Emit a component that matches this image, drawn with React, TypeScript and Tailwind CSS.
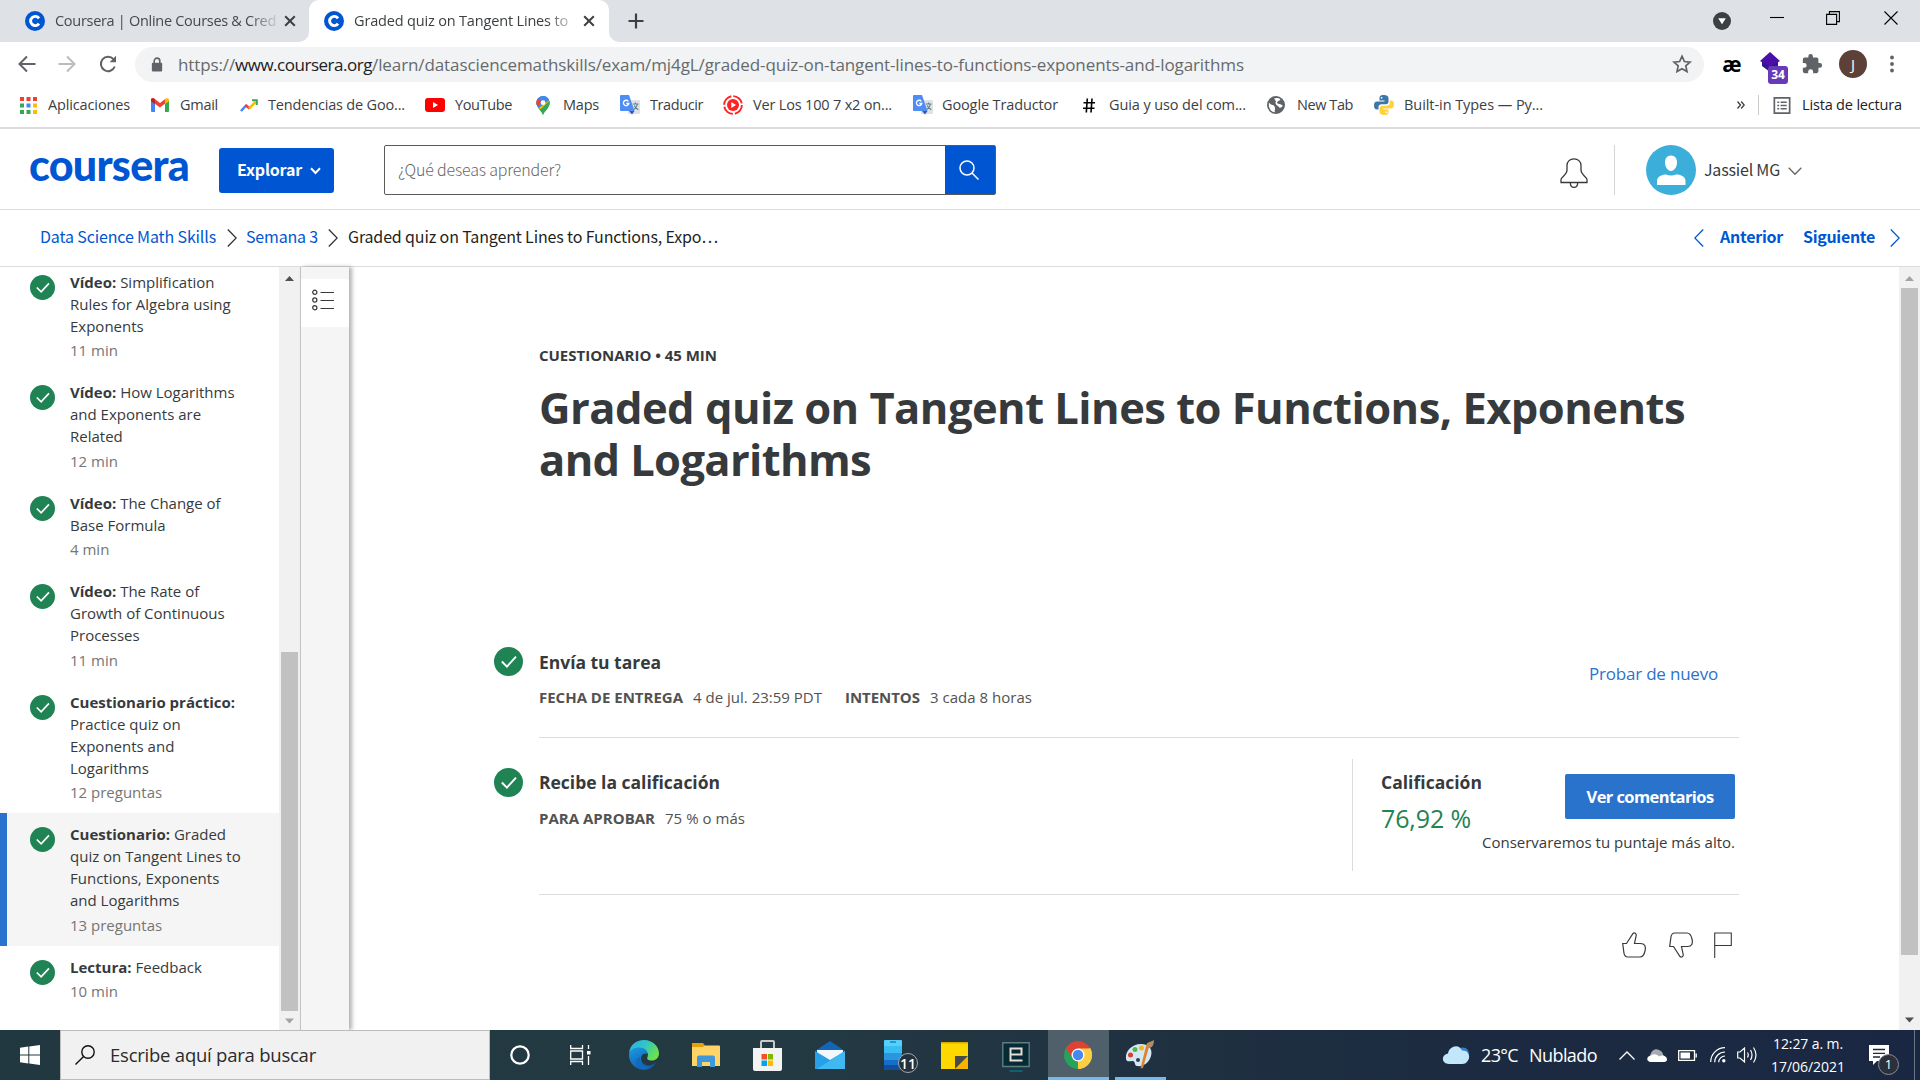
import React, { useLayoutEffect, useRef, useState } from "react";

/* One line of text whose tracking is adjusted so that it fills its box. */
function Fit({ children, className = "" }: { children: string; className?: string }) {
  const box = useRef<HTMLDivElement>(null);
  const inner = useRef<HTMLSpanElement>(null);
  const [spacing, setSpacing] = useState(0);
  useLayoutEffect(() => {
    if (box.current && inner.current) {
      const target = box.current.getBoundingClientRect().width;
      const natural = inner.current.getBoundingClientRect().width;
      setSpacing((target - natural) / children.length);
    }
  }, [children]);
  return (
    <div ref={box} className={"shrink-0 whitespace-nowrap " + className}>
      <span ref={inner} style={{ letterSpacing: spacing + "px" }}>
        {children}
      </span>
    </div>
  );
}

function CourseraMark() {
  return (
    <svg viewBox="0 0 20 20" className="h-5 w-5 shrink-0">
      <circle cx="10" cy="10" r="10" fill="#0056d2" />
      <path d="M14 7.4 A4.6 4.6 0 1 0 14 12.6" fill="none" stroke="#fff" strokeWidth="2.9" />
    </svg>
  );
}

function TabClose() {
  return (
    <svg viewBox="0 0 12 12" className="h-3 w-3 shrink-0" stroke="#3c4043" strokeWidth="2">
      <path d="M1.2 1.2 10.8 10.8M10.8 1.2 1.2 10.8" />
    </svg>
  );
}

function TabStrip() {
  return (
    <div className="flex h-[42px] items-end bg-[#dee1e6]">
      <div className="flex h-[42px] w-[309px] shrink-0 items-center pl-[25px]">
        <CourseraMark />
        <Fit className="ml-[10px] w-[221px] text-[14.5px] text-[#45494d] [mask-image:linear-gradient(to_right,black_88%,rgba(0,0,0,0.15))]">
          Coursera | Online Courses &amp; Cred
        </Fit>
        <div className="ml-[8px]">
          <TabClose />
        </div>
      </div>
      <div className="relative flex h-[42px] w-[300px] shrink-0 items-center rounded-t-[10px] bg-white pl-[15px]">
        <svg viewBox="0 0 10 10" className="absolute bottom-0 left-[-10px] h-[10px] w-[10px]">
          <path d="M10 0V10H0A10 10 0 0 0 10 0" fill="#fff" />
        </svg>
        <svg viewBox="0 0 10 10" className="absolute right-[-10px] bottom-0 h-[10px] w-[10px]">
          <path d="M0 0V10H10A10 10 0 0 1 0 0" fill="#fff" />
        </svg>
        <CourseraMark />
        <Fit className="ml-[10px] w-[214px] text-[14.5px] text-[#3c4043] [mask-image:linear-gradient(to_right,black_90%,rgba(0,0,0,0.35))]">
          Graded quiz on Tangent Lines to
        </Fit>
        <div className="ml-[15px]">
          <TabClose />
        </div>
      </div>
      <svg viewBox="0 0 16 16" className="mb-[13px] ml-[19px] h-4 w-4" stroke="#3c4043" strokeWidth="2.2">
        <path d="M8 .5V15.5M.5 8H15.5" />
      </svg>
      <div className="flex h-[42px] flex-1 items-center justify-end">
        <svg viewBox="0 0 18 18" className="h-[18px] w-[18px]">
          <circle cx="9" cy="9" r="9" fill="#3c4043" />
          <path d="M5.2 6.3H12.8L9 12.3Z" fill="#fff" />
        </svg>
        <svg viewBox="0 0 14 14" className="mb-[8px] ml-[39px] h-[14px] w-[14px]" stroke="#000" strokeWidth="1.1">
          <path d="M0 7.5H14" />
        </svg>
        <svg viewBox="0 0 14 14" className="mb-[6px] ml-[42px] h-[14px] w-[14px]" fill="none" stroke="#000" strokeWidth="1.1">
          <path d="M.6 3.4H10.6V13.4H.6ZM3.4 3.4V.6H13.4V10.6H10.6" />
        </svg>
        <svg viewBox="0 0 14 14" className="mr-[22px] mb-[6px] ml-[44px] h-[14px] w-[14px]" stroke="#000" strokeWidth="1.1">
          <path d="M.5.5 13.5 13.5M13.5.5.5 13.5" />
        </svg>
      </div>
    </div>
  );
}

function AddressBar() {
  return (
    <div className="flex h-[44px] items-center bg-white pl-[18px]">
      <svg viewBox="0 0 18 18" className="h-[18px] w-[18px]" fill="none" stroke="#5f6368" strokeWidth="2">
        <path d="M17.5 9H2M9 1.5 1.5 9 9 16.5" />
      </svg>
      <svg viewBox="0 0 18 18" className="ml-[22px] h-[18px] w-[18px]" fill="none" stroke="#babcbe" strokeWidth="2">
        <path d="M.5 9H16M9 1.5 16.5 9 9 16.5" />
      </svg>
      <svg viewBox="0 0 18 18" className="ml-[23px] h-[18px] w-[18px]" fill="none" stroke="#5f6368" strokeWidth="2">
        <path d="M15.8 11.5A7.2 7.2 0 1 1 14.5 4.2" />
        <path d="M17 .8V7.2H10.6Z" fill="#5f6368" stroke="none" />
      </svg>
      <div className="ml-[18px] flex h-[35px] w-[1569px] items-center rounded-full bg-[#f1f3f4]">
        <svg viewBox="0 0 12 16" className="ml-[16px] h-[15px] w-[12px]">
          <rect x=".5" y="6" width="11" height="9.5" rx="1.2" fill="#5f6368" />
          <path d="M3 7V4.2A3 3 0 0 1 9 4.2V7" fill="none" stroke="#5f6368" strokeWidth="1.7" />
        </svg>
        <div className="mt-[2px] ml-[15px] flex text-[17px] text-[#666a6e]">
          <Fit className="w-[57px]">https://</Fit>
          <Fit className="w-[137px] text-[#202124]">www.coursera.org</Fit>
          <Fit className="w-[872px]">/learn/datasciencemathskills/exam/mj4gL/graded-quiz-on-tangent-lines-to-functions-exponents-and-logarithms</Fit>
        </div>
        <svg viewBox="0 0 20 20" className="ml-[428px] h-[20px] w-[20px]" fill="none" stroke="#5f6368" strokeWidth="1.7">
          <path d="M10 2.2 12.4 7.5 18 8.1 13.8 11.9 15 17.6 10 14.7 5 17.6 6.2 11.9 2 8.1 7.6 7.5Z" />
        </svg>
      </div>
      <div className="ml-[17px] w-[22px] text-center text-[21px] leading-[20px] font-bold text-black">æ</div>
      <div className="relative ml-[17px] h-[34px] w-[28px]">
        <svg viewBox="0 0 20 22" className="absolute top-[5px] left-0 h-[22px] w-[20px]">
          <path d="M2 10 10 6 18 10V14L10 20 2 14Z" fill="#33148a" />
          <path d="M10 0 20 9 10 15 0 9Z" fill="#4a0fa8" />
        </svg>
        <div className="absolute right-0 bottom-[-3px] h-[18px] w-[20px] rounded-[3px] bg-[#673ab7] text-center text-[12px] leading-[18px] font-bold text-white">
          34
        </div>
      </div>
      <svg viewBox="0 0 24 24" className="ml-[13px] h-[22px] w-[22px]">
        <path
          fill="#5f6368"
          d="M20.5 11H19V7a2 2 0 0 0-2-2h-4V3.500a2.500 2.500 0 0 0-5 0V5H4a2 2 0 0 0-2 2v3.800h1.500a2.700 2.700 0 0 1 0 5.400H2V20a2 2 0 0 0 2 2h3.800v-1.500a2.700 2.700 0 0 1 5.400 0V22H17a2 2 0 0 0 2-2v-4h1.500a2.500 2.500 0 0 0 0-5Z"
        />
      </svg>
      <div className="ml-[16px] flex h-[28px] w-[28px] items-center justify-center rounded-full bg-[#5d4037] text-[15px] text-white">J</div>
      <svg viewBox="0 0 4 18" className="ml-[23px] h-[18px] w-[4px]" fill="#5f6368">
        <circle cx="2" cy="2.500" r="1.900" />
        <circle cx="2" cy="9" r="1.900" />
        <circle cx="2" cy="15.500" r="1.900" />
      </svg>
    </div>
  );
}

function TranslateIcon() {
  return (
    <svg viewBox="0 0 20 20" className="h-[20px] w-[20px]">
      <rect x="8" y="5" width="12" height="14" rx="1" fill="#dfe1e4" />
      <path d="M1 0H9L14.500 16H1A1 1 0 0 1 0 15V1A1 1 0 0 1 1 0Z" fill="#4f8df5" />
      <path d="M9 16H14.500L12 19.500Z" fill="#3357c0" />
      <path d="M8.300 6.300A2.700 2.700 0 1 0 8.800 8.500H6.300" fill="none" stroke="#fff" strokeWidth="1.300" />
      <path d="M12.800 9H18.500M15.500 7.500V9M17.500 9C17 12 15.500 13.500 13.800 14.500M14.300 10.500C15 12.500 16.500 13.800 18.300 14.800" fill="none" stroke="#5f7f88" strokeWidth="1.100" />
    </svg>
  );
}

function BookmarksBar() {
  return (
    <div className="flex h-[43px] items-center border-b-2 border-[#dadce0] bg-white pb-[3px] pl-[20px] text-[14.5px] text-[#3c4043]">
      <svg viewBox="0 0 17 17" className="h-[17px] w-[17px]">
        <path fill="#ea4335" d="M0 0h4v4H0zM6.500 0h4v4h-4zM13 0h4v4h-4z" />
        <path fill="#34a853" d="M0 6.500h4v4H0zM0 13h4v4H0z" />
        <path fill="#4285f4" d="M6.500 6.500h4v4h-4z" />
        <path fill="#fbbc04" d="M13 6.500h4v4h-4zM13 13h4v4h-4z" />
        <path fill="#34a853" d="M6.500 13h4v4h-4z" />
      </svg>
      <Fit className="ml-[11px] w-[82px]">Aplicaciones</Fit>
      <svg viewBox="0 0 18 14" className="ml-[21px] h-[14px] w-[18px]">
        <path fill="#4285f4" d="M0 1.500V13A1 1 0 0 0 1 14H4V5Z" />
        <path fill="#34a853" d="M18 1.500V13A1 1 0 0 1 17 14H14V5Z" />
        <path fill="#ea4335" d="M0 1.800C0 0 2 -.5 3.200.5L9 5 14.800.5V5L9 9.500 0 3Z" />
        <path fill="#fbbc04" d="M14 1.200C15.500-.5 18 0 18 2V3.200L14 6Z" />
        <path fill="#c5221f" d="M0 1.800C0 0 2-.5 4 1.200V6L0 3.200Z" />
      </svg>
      <Fit className="ml-[11px] w-[38px]">Gmail</Fit>
      <svg viewBox="0 0 18 13" className="ml-[22px] h-[13px] w-[18px]" fill="none" strokeWidth="2.500">
        <path d="M1 12 6.500 6" stroke="#4285f4" />
        <path d="M5.500 6 9.500 9.500" stroke="#ea4335" />
        <path d="M9 9.500 15.500 3" stroke="#fbbc04" />
        <path d="M12 1.300H16.800V6" stroke="#34a853" strokeWidth="2" />
      </svg>
      <Fit className="ml-[10px] w-[137px]">Tendencias de Goo...</Fit>
      <svg viewBox="0 0 20 14" className="ml-[20px] h-[14px] w-[20px]">
        <rect width="20" height="14" rx="3" fill="#f00" />
        <path d="M8 4V10L13 7Z" fill="#fff" />
      </svg>
      <Fit className="ml-[10px] w-[57px]">YouTube</Fit>
      <svg viewBox="0 0 14 20" className="ml-[24px] h-[19px] w-[14px]">
        <path d="M7 20C6 16 0 12.500 0 7A7 7 0 0 1 14 7C14 12.500 8 16 7 20Z" fill="#34a853" />
        <path d="M7 0A7 7 0 0 1 13.500 4.500L2.500 12.500Q0 9.500 0 7A7 7 0 0 1 7 0" fill="#4285f4" />
        <path d="M1.500 2.600 6 6 1.500 11Q0 9 0 7 0 4.500 1.500 2.600" fill="#ea4335" />
        <path d="M13.500 4.500Q14.500 8 12 11.500L7.500 16 2.500 12.500Z" fill="#fbbc04" />
        <path d="M14 7C14 12.500 8 16 7 20 6.500 18 5.500 16.500 4 14.500L13.800 5Z" fill="#34a853" />
        <circle cx="7" cy="7" r="2.500" fill="#fff" />
      </svg>
      <Fit className="ml-[13px] w-[36px]">Maps</Fit>
      <div className="ml-[21px]">
        <TranslateIcon />
      </div>
      <Fit className="ml-[10px] w-[53px]">Traducir</Fit>
      <svg viewBox="0 0 20 20" className="ml-[20px] h-[20px] w-[20px]">
        <circle cx="10" cy="10" r="8.900" fill="none" stroke="#f22" strokeWidth="1.900" strokeDasharray="12 1.980" />
        <circle cx="10" cy="10" r="6" fill="#f22" />
        <path d="M8.300 7V13L13 10Z" fill="#fff" />
      </svg>
      <Fit className="ml-[10px] w-[139px]">Ver Los 100 7 x2 on...</Fit>
      <div className="ml-[21px]">
        <TranslateIcon />
      </div>
      <Fit className="ml-[9px] w-[116px]">Google Traductor</Fit>
      <svg viewBox="0 0 12 15" className="ml-[25px] h-[15px] w-[12px]" stroke="#000" strokeWidth="1.600">
        <path d="M4.300.5 3.300 14.500M9 .5 8 14.500M.5 4.800H12M0 10.200H11.500" />
      </svg>
      <Fit className="ml-[14px] w-[137px]">Guia y uso del com...</Fit>
      <svg viewBox="0 0 18 18" className="ml-[21px] h-[18px] w-[18px]">
        <circle cx="9" cy="9" r="9" fill="#5f6368" />
        <path d="M2 6.500C4 10 6 8 7.500 10.500 9 13 7 13.500 8 16.300 4 16.300 1 12 2 6.500M7 2.500C9 1.500 12 2 13.500 3.300 12 5.500 10.500 4.500 10 7 12 8.500 13 7.500 15.800 9.500 14.500 12 12.500 12.500 11.500 10.500 9.500 9 8.500 8.500 8.500 6.500 9.500 5 8 4 7 2.500" fill="#fff" />
      </svg>
      <Fit className="ml-[12px] w-[56px]">New Tab</Fit>
      <svg viewBox="0 0 20 20" className="ml-[21px] h-[20px] w-[20px]">
        <path d="M10 0C6 0 5.500 1.500 5.500 3V5.500H10.500V6.500H3C1 6.500 0 8 0 10.500S1 14.500 3 14.500H4.500V12C4.500 10.300 6 9.300 7.500 9.300H12C13.500 9.300 14.500 8 14.500 6.800V3C14.500 1 12.500 0 10 0Z" fill="#3b77a8" />
        <path d="M10 20C14 20 14.500 18.500 14.500 17V14.500H9.500V13.500H17C19 13.500 20 12 20 9.500S19 5.500 17 5.500H15.700V8C15.700 9.700 14 10.700 12.500 10.700H8C6.500 10.700 5.500 12 5.500 13.200V17C5.500 19 7.500 20 10 20Z" fill="#ffd43b" />
        <circle cx="7.600" cy="2.800" r=".9" fill="#fff" />
        <circle cx="12.400" cy="17.200" r=".9" fill="#fff" />
      </svg>
      <Fit className="ml-[10px] w-[139px]">Built-in Types — Py...</Fit>
      <svg viewBox="0 0 8 8" className="mr-[13px] ml-auto h-[8px] w-[8px] shrink-0" fill="none" stroke="#3c4043" strokeWidth="1.300">
        <path d="M.5.500 3.500 4 .5 7.500M4.200.500 7.200 4 4.200 7.500" />
      </svg>
      <div className="h-[20px] w-px bg-[#c8cacd]" />
      <svg viewBox="0 0 18 18" className="ml-[14px] h-[17px] w-[18px] shrink-0" fill="none" stroke="#5f6368" strokeWidth="1.800">
        <path d="M.9.900H17.100V17.100H.9Z" />
        <path d="M4 5.500H6M4 9H6M4 12.500H6M7.500 5.500H14M7.500 9H14M7.500 12.500H14" strokeWidth="1.600" />
      </svg>
      <Fit className="mr-[18px] ml-[11px] w-[100px] text-[#202124]">Lista de lectura</Fit>
    </div>
  );
}

function Chevron({ flip = false, color }: { flip?: boolean; color: string }) {
  return (
    <svg viewBox="0 0 10 18" className={flip ? "h-[18px] w-[10px] shrink-0 -scale-x-100" : "h-[18px] w-[10px] shrink-0"} fill="none" stroke={color} strokeWidth="1.300">
      <path d="M.8.500 9.200 9 .8 17.500" />
    </svg>
  );
}

const SOURCE = "font-['Noto_Sans_CJK_SC',sans-serif] ";

function Header() {
  return (
    <div className={SOURCE + "flex h-[81px] items-center border-b border-[#dcdcdc] bg-white pt-[2px] text-[16px]"}>
      <Fit className="mb-[10px] ml-[29px] w-[160px] font-['Lato',sans-serif] text-[43px] leading-[44px] font-black text-[#0056d2]">coursera</Fit>
      <div className="ml-[30px] flex h-[45px] w-[115px] items-center rounded-[3px] bg-[#0056d2] pl-[18px] text-white">
        <Fit className="mb-[2px] w-[65px] font-bold">Explorar</Fit>
        <svg viewBox="0 0 11 8" className="mt-[2px] ml-[8px] h-[8px] w-[11px]" fill="none" stroke="#fff" strokeWidth="2">
          <path d="M1 1.200 5.500 6 10 1.200" />
        </svg>
      </div>
      <div className="ml-[50px] flex h-[50px] w-[612px] items-center justify-between rounded-[2px] border border-[#5a5a5a] pl-[13px]">
        <Fit className="mb-[2px] w-[163px] font-light text-[#666]">¿Qué deseas aprender?</Fit>
        <div className="flex h-[48px] w-[50px] items-center justify-center bg-[#0056d2] pr-[2px]">
          <svg viewBox="0 0 20 20" className="h-[20px] w-[20px]" fill="none" stroke="#fff" strokeWidth="1.500">
            <circle cx="8" cy="8" r="7" />
            <path d="M13 13 19.500 19.500" />
          </svg>
        </div>
      </div>
      <svg viewBox="0 0 28 30" className="mt-[6px] ml-[564px] h-[30px] w-[28px]" fill="none" stroke="#373a3c" strokeWidth="1.300">
        <path d="M1 24.500H27V21.500C27 19 21 17 21 12V7.500C21 3.500 18 .8 14 .8S7 3.500 7 7.500V12C7 17 1 19 1 21.500ZM10.300 24.500C10.300 31 17.700 31 17.700 24.500" />
      </svg>
      <div className="ml-[26px] h-[50px] w-px bg-[#d5d5d5]" />
      <svg viewBox="0 0 50 50" className="ml-[31px] h-[50px] w-[50px]">
        <circle cx="25" cy="25" r="25" fill="#3bafda" />
        <path d="M25 10.500C29 10.500 31 13.500 31 17.500S28.500 26 25 26 19 21.500 19 17.500 21 10.500 25 10.500ZM11 40V36C11 31 17 29.500 20 29.500Q25 31.500 30 29.500C34 29.500 39.500 31 39.500 36V40Z" fill="#fff" />
      </svg>
      <Fit className="mb-[2px] ml-[8px] w-[76px] text-[#373a3c]">Jassiel MG</Fit>
      <svg viewBox="0 0 14 8" className="mt-[2px] ml-[8px] h-[8px] w-[14px]" fill="none" stroke="#666" strokeWidth="1.300">
        <path d="M.7.700 7 7.300 13.300.700" />
      </svg>
    </div>
  );
}

function Breadcrumbs() {
  return (
    <div className={SOURCE + "flex h-[57px] items-center border-b border-[#dcdcdc] bg-white text-[16px] text-[#0056d2]"}>
      <Fit className="mb-[5px] ml-[40px] w-[176px]">Data Science Math Skills</Fit>
      <div className="ml-[11px]">
        <Chevron color="#333" />
      </div>
      <Fit className="mb-[5px] ml-[9px] w-[72px]">Semana 3</Fit>
      <div className="ml-[10px]">
        <Chevron color="#333" />
      </div>
      <Fit className="mb-[5px] ml-[10px] w-[370px] text-[#1f1f1f]">Graded quiz on Tangent Lines to Functions, Expo…</Fit>
      <div className="mr-[20px] ml-auto flex items-center">
        <Chevron flip color="#0056d2" />
        <Fit className="mb-[5px] ml-[16px] w-[63px] font-bold">Anterior</Fit>
        <Fit className="mb-[5px] ml-[20px] w-[72px] font-bold">Siguiente</Fit>
        <div className="ml-[15px]">
          <Chevron color="#0056d2" />
        </div>
      </div>
    </div>
  );
}

function Check({ className }: { className: string }) {
  return (
    <svg viewBox="0 0 24 24" className={"shrink-0 " + className}>
      <circle cx="12" cy="12" r="12" fill="#1f8354" />
      <path d="M6.500 12 10.700 16.200 18.200 8" fill="none" stroke="#fff" strokeWidth="1.600" />
    </svg>
  );
}

const lessons = [
  { kind: "Vídeo:", first: " Simplification", rest: ["Rules for Algebra using", "Exponents"], meta: "11 min" },
  { kind: "Vídeo:", first: " How Logarithms", rest: ["and Exponents are", "Related"], meta: "12 min" },
  { kind: "Vídeo:", first: " The Change of", rest: ["Base Formula"], meta: "4 min" },
  { kind: "Vídeo:", first: " The Rate of", rest: ["Growth of Continuous", "Processes"], meta: "11 min" },
  { kind: "Cuestionario práctico:", first: "", rest: ["Practice quiz on", "Exponents and", "Logarithms"], meta: "12 preguntas" },
  { kind: "Cuestionario:", first: " Graded", rest: ["quiz on Tangent Lines to", "Functions, Exponents", "and Logarithms"], meta: "13 preguntas", active: true },
  { kind: "Lectura:", first: " Feedback", rest: [], meta: "10 min" },
];

function Sidebar() {
  return (
    <div className="flex h-full w-[279px] shrink-0 flex-col overflow-hidden">
      <div className="mt-[-6.500px] flex flex-col">
        {lessons.map((l, i) => (
          <div
            key={i}
            className={
              l.active
                ? "flex border-l-[7px] border-[#2a73cc] bg-[#f5f5f5] pt-[10px] pb-[10px] pl-[23px]"
                : "flex border-l-[7px] border-transparent pt-[10px] pb-[10px] pl-[23px]"
            }
          >
            <Check className="mt-[4px] h-[25px] w-[25px]" />
            <div className="ml-[15px] text-[15px] leading-[22px] whitespace-nowrap text-[#373a3c]">
              <div>
                <span className="font-bold">{l.kind}</span>
                {l.first}
              </div>
              {l.rest.map((line) => (
                <div key={line}>{line}</div>
              ))}
              <div className="mt-[2.500px] text-[#757575]">{l.meta}</div>
            </div>
          </div>
        ))}
      </div>
    </div>
  );
}

function Scrollbar({ thumb, up, down }: { thumb: string; up: string; down: string }) {
  return (
    <div className="flex h-full w-[21px] shrink-0 flex-col items-center bg-[#f1f1f1]">
      <svg viewBox="0 0 21 20" className="h-[20px] w-[21px] shrink-0">
        <path d="M6 14H15L10.500 9Z" fill={up} />
      </svg>
      <div className="flex w-[17px] flex-1 flex-col">
        <div className={"w-[17px] bg-[#c1c1c1] " + thumb} />
      </div>
      <svg viewBox="0 0 21 20" className="h-[20px] w-[21px] shrink-0">
        <path d="M6 7.500H15L10.500 12.500Z" fill={down} />
      </svg>
    </div>
  );
}

function QuizPage() {
  return (
    <div className="flex flex-1 flex-col pt-[77px] pl-[190px] text-[#373a3c]">
      <Fit className="w-[178px] text-[15px] leading-[22px] font-bold">CUESTIONARIO • 45 MIN</Fit>
      <h1 className="mt-[16px] text-[43.5px] leading-[52px] font-bold">
        <Fit className="w-[1146px]">Graded quiz on Tangent Lines to Functions, Exponents</Fit>
        <Fit className="w-[332px]">and Logarithms</Fit>
      </h1>

      <div className="mt-[160px] ml-[-45px] flex h-[92px] w-[1245px]">
        <Check className="mt-[1px] h-[29px] w-[29px]" />
        <div className="ml-[16px] flex flex-1 border-b border-[#dcdcdc]">
          <div className="pt-[4px]">
            <Fit className="w-[122px] text-[17.5px] leading-[24px] font-bold">Envía tu tarea</Fit>
            <div className="mt-[12px] flex text-[15px] leading-[22px] text-[#525252]">
              <Fit className="w-[144px] font-bold">FECHA DE ENTREGA</Fit>
              <Fit className="ml-[10px] w-[129px]">4 de jul. 23:59 PDT</Fit>
              <Fit className="ml-[23px] w-[75px] font-bold">INTENTOS</Fit>
              <Fit className="ml-[10px] w-[102px]">3 cada 8 horas</Fit>
            </div>
          </div>
          <Fit className="mt-[16px] mr-[21px] ml-auto w-[129px] text-[17px] leading-[24px] font-medium text-[#2a73cc]">Probar de nuevo</Fit>
        </div>
      </div>

      <div className="ml-[-45px] flex h-[157px] w-[1245px]">
        <Check className="mt-[30px] h-[29px] w-[29px]" />
        <div className="ml-[16px] flex flex-1 justify-between border-b border-[#dcdcdc]">
          <div className="pt-[32px]">
            <Fit className="w-[181px] text-[17.5px] leading-[24px] font-bold">Recibe la calificación</Fit>
            <div className="mt-[13px] flex text-[15px] leading-[22px] text-[#525252]">
              <Fit className="w-[116px] font-bold">PARA APROBAR</Fit>
              <Fit className="ml-[10px] w-[80px]">75 % o más</Fit>
            </div>
          </div>
          <div className="mt-[21px] mr-[4px] flex h-[112px] w-[383px] border-l border-[#dcdcdc] pl-[28px]">
            <div className="w-[101px] pt-[11px]">
              <Fit className="w-[101px] text-[17.5px] leading-[24px] font-bold">Calificación</Fit>
              <Fit className="mt-[8px] w-[90px] text-[25px] leading-[32px] text-[#1f8354]">76,92 %</Fit>
            </div>
            <div className="flex flex-1 flex-col items-end pt-[15px]">
              <div className="flex h-[45px] w-[170px] items-center justify-center rounded-[2px] bg-[#2a73cc] pt-[2px] text-white">
                <Fit className="w-[127px] text-[16.5px] font-bold">Ver comentarios</Fit>
              </div>
              <Fit className="mt-[12px] w-[253px] text-[15px] leading-[22px]">Conservaremos tu puntaje más alto.</Fit>
            </div>
          </div>
        </div>
      </div>

      <div className="mt-[37px] ml-[1083px] flex text-[#373a3c]">
        <svg viewBox="0 0 24 26" className="h-[26px] w-[24px]" fill="none" stroke="currentColor" strokeWidth="1.200">
          <path d="M.7 11.500H4.500L11 1.500C12.500.2 14.500 1.500 14.200 3.500L12.500 11.500H18.500C23 11.500 24 14.500 23 19 22 23.500 20.500 25 18 25H6C3.500 25 2 23 1.800 20Z" />
        </svg>
        <svg viewBox="0 0 24 26" className="ml-[23px] h-[26px] w-[24px] -scale-y-100" fill="none" stroke="currentColor" strokeWidth="1.200">
          <path d="M.7 11.500H4.500L11 1.500C12.500.2 14.500 1.500 14.200 3.500L12.500 11.500H18.500C23 11.500 24 14.500 23 19 22 23.500 20.500 25 18 25H6C3.500 25 2 23 1.800 20Z" />
        </svg>
        <svg viewBox="0 0 18 26" className="ml-[21px] h-[26px] w-[18px]" fill="none" stroke="currentColor" strokeWidth="1.100">
          <path d="M.7 26V1H17.300V13.500H.7" />
        </svg>
      </div>
    </div>
  );
}

function Workspace() {
  return (
    <div className="flex h-[763px] bg-white">
      <Sidebar />
      <Scrollbar thumb="mt-[365px] h-[359px]" up="#505050" down="#a3a3a3" />
      <div className="h-full w-[49px] shrink-0 border-l border-[#c4c4c4] bg-[#f5f5f5] pt-[12px] shadow-[3px_0_4px_rgba(0,0,0,0.3)]">
        <div className="flex h-[48px] items-center justify-center rounded-[2px] bg-white pr-[4px]">
          <svg viewBox="0 0 22 22" className="mb-[6px] h-[22px] w-[22px]" fill="none" stroke="#373a3c" strokeWidth="1.200">
            <circle cx="2.800" cy="3.300" r="2.100" />
            <circle cx="2.800" cy="11" r="2.100" />
            <circle cx="2.800" cy="18.700" r="2.100" />
            <path d="M8.500 3.500H22M8.500 11.500H22M8.500 19.500H22" />
          </svg>
        </div>
      </div>
      <QuizPage />
      <Scrollbar thumb="mt-[1px] h-[667px]" up="#a3a3a3" down="#505050" />
    </div>
  );
}

function Slot({ width, children, className = "" }: { width: string; children: React.ReactNode; className?: string }) {
  return <div className={"relative flex h-full shrink-0 items-center justify-center " + width + " " + className}>{children}</div>;
}

function Taskbar() {
  return (
    <div className="flex h-[50px] items-center bg-[linear-gradient(90deg,#213841_0%,#233a43_40%,#1f3040_62%,#1c2b40_75%,#1a2743_100%)] text-white">
      <Slot width="w-[60px]">
        <svg viewBox="0 0 20 20" className="h-[20px] w-[20px]" fill="#fff">
          <path d="M0 2.800 8.300 1.500V9.500H0ZM9.300 1.400 20 0V9.500H9.300ZM0 10.500H8.300V18.600L0 17.300ZM9.300 10.500H20V20L9.300 18.600Z" />
        </svg>
      </Slot>
      <div className="flex h-[50px] w-[430px] items-center border border-[#bcbcbc] bg-[#f1f1f1] pl-[14px] text-[#2b2b2b]">
        <svg viewBox="0 0 20 20" className="h-[20px] w-[20px]" fill="none" stroke="#111" strokeWidth="1.400">
          <circle cx="13" cy="7" r="6.200" />
          <path d="M8.600 11.400.5 19.500" />
        </svg>
        <Fit className="ml-[15px] w-[206px] text-[18.5px]">Escribe aquí para buscar</Fit>
      </div>
      <Slot width="w-[60px]">
        <svg viewBox="0 0 20 20" className="h-[20px] w-[20px]">
          <circle cx="10" cy="10" r="8.700" fill="none" stroke="#fff" strokeWidth="2.200" />
        </svg>
      </Slot>
      <Slot width="w-[60px]">
        <svg viewBox="0 0 21 20" className="h-[20px] w-[21px]" fill="none" stroke="#fff" strokeWidth="1.300">
          <path d="M.7 0V3.500H12.500V0M.7 20V16.500H12.500V20M.7 6H12.500V14H.7ZM18.500 0V4M18.500 11V20" />
          <path d="M17 6h3.500v3.500H17z" fill="#fff" stroke="none" />
        </svg>
      </Slot>
      <Slot width="w-[68px]">
        <svg viewBox="0 0 30 30" className="h-[30px] w-[30px]">
          <defs>
            <linearGradient id="edgeTop" x1="0" y1="0" x2="1" y2=".5">
              <stop offset="0" stopColor="#2bb0e8" />
              <stop offset=".5" stopColor="#2fc4c9" />
              <stop offset="1" stopColor="#6be04f" />
            </linearGradient>
            <linearGradient id="edgeLow" x1="0" y1="0" x2=".6" y2="1">
              <stop offset="0" stopColor="#1f9be6" />
              <stop offset="1" stopColor="#0c59a8" />
            </linearGradient>
          </defs>
          <path d="M0 13C1 5 7 0 15 0 24 0 30 6.500 30 13.500 30 18 26.500 20.500 23 20.500 19 20.500 17.500 19 18.500 17 20 14 18 9 11 9 5 9 1 12 0 13Z" fill="url(#edgeTop)" />
          <path d="M0 15C0 10 5 7.500 10 7.500 16 7.500 18.500 11 18.500 13.500 12 12.500 11 18 13 22 15 26 21 27 27 22.500 24 27.500 20 30 15 30 6.500 30 0 23 0 15Z" fill="url(#edgeLow)" />
          <path d="M11 17C10 23 15 28 22 26.500 19 29 15 30 12 29 5 26 6 18 11 17Z" fill="#1369bd" />
        </svg>
      </Slot>
      <Slot width="w-[56px]">
        <svg viewBox="0 0 28 24" className="h-[24px] w-[28px]">
          <path d="M0 0H11L13 2.500V5H0Z" fill="#e2a208" />
          <path d="M0 4H11L13 2.500H27A1 1 0 0 1 28 3.500V23H0Z" fill="#ffd568" />
          <path d="M5 24V14A2 2 0 0 1 7 12.500H21A2 2 0 0 1 23 14V24H18V19H10V24Z" fill="#3f97dc" />
          <path d="M10 19H18V23H10Z" fill="#ffd568" />
        </svg>
      </Slot>
      <Slot width="w-[67px]">
        <svg viewBox="0 0 29 31" className="h-[31px] w-[29px]">
          <path d="M8 9V2A1.500 1.500 0 0 1 9.500.9H19.500A1.500 1.500 0 0 1 21 2V9" fill="none" stroke="#c9c9c9" strokeWidth="2" />
          <path d="M0 8H29V29A2 2 0 0 1 27 31H2A2 2 0 0 1 0 29Z" fill="#f3f3f3" />
          <path d="M8.500 14H14V19.500H8.500Z" fill="#f25022" />
          <path d="M15 14H20V19.500H15Z" fill="#7fba00" />
          <path d="M8.500 20.500H14V26H8.500Z" fill="#00a4ef" />
          <path d="M15 20.500H20V26H15Z" fill="#ffb900" />
        </svg>
      </Slot>
      <Slot width="w-[58px]">
        <svg viewBox="0 0 30 28" className="h-[28px] w-[30px]">
          <path d="M0 10 15 0 30 10Z" fill="#1366b5" />
          <path d="M2 9H28V24H2Z" fill="#f2f8fd" />
          <path d="M0 10 15 19 30 10V28H0Z" fill="#28a0e8" />
          <path d="M30 10V28H2Z" fill="#41b8f2" />
        </svg>
      </Slot>
      <Slot width="w-[74px]" className="pl-[9px]">
        <svg viewBox="0 0 34 36" className="h-[36px] w-[34px]">
          <path d="M1 3H17A1 1 0 0 1 18 4V32H0V4A1 1 0 0 1 1 3Z" fill="#55d0fa" />
          <path d="M6 5H12" stroke="#0b5c9c" />
          <path d="M0 9H18V16H0Z" fill="#39bdf3" />
          <path d="M0 16H18V23H0Z" fill="#2a96e0" />
          <path d="M0 23H18V28H0Z" fill="#156fc8" />
          <path d="M0 28H18V33H0Z" fill="#0f4f9e" />
          <circle cx="24" cy="26" r="9.500" fill="#25313a" stroke="#a3a9ad" />
        </svg>
        <div className="absolute top-[24px] left-[39px] w-[20px] text-center text-[14px] leading-[20px] font-semibold">11</div>
      </Slot>
      <Slot width="w-[42px]">
        <svg viewBox="0 0 27 27" className="h-[27px] w-[27px]">
          <path d="M0 0H27V14L14 27H0Z" fill="#ffd800" />
          <path d="M0 0H27V1.500H0Z" fill="#d9aa00" />
          <path d="M14 27V14H27Z" fill="#4b4b46" />
          <path d="M27 14V27H14Z" fill="#f7b500" />
        </svg>
      </Slot>
      <Slot width="w-[73px]" className="pt-[3px] pl-[8px]">
        <svg viewBox="0 0 28 30" className="h-[30px] w-[28px]" fill="none">
          <path d="M.8.800H27.200V24.500H.8Z" fill="#062b36" stroke="#5d7f80" strokeWidth="1.400" />
          <path d="M7.500 29H20.500" stroke="#0b6271" strokeWidth="2" />
          <path d="M20.500 6.500H8.500V18.500H20.500M8.500 12.500H19.500V6.500" stroke="#e4ddd0" strokeWidth="2" />
        </svg>
      </Slot>
      <Slot width="w-[61px]" className="border-b-[3px] border-[#76b9ed] bg-[#50606a] pr-[2px]">
        <svg viewBox="0 0 28 28" className="mt-[3px] h-[28px] w-[28px]">
          <path d="M14 14 1.900 7A14 14 0 0 1 26.100 7Z" fill="#de4234" />
          <path d="M14 14 26.100 7A14 14 0 0 1 14 28Z" fill="#fdce44" />
          <path d="M14 14 14 28A14 14 0 0 1 1.900 7Z" fill="#25a35a" />
          <path d="M14 7.500H26.400A14 14 0 0 1 14 28L19.500 17Z" fill="#fdce44" />
          <path d="M1.900 7 8.500 17.200 14 14 14 7.500Z" fill="#de4234" />
          <circle cx="14" cy="14" r="6.500" fill="#fff" />
          <circle cx="14" cy="14" r="5.200" fill="#4787f2" />
        </svg>
      </Slot>
      <Slot width="w-[51px]" className="ml-[6px] border-b-[3px] border-[#76b9ed] pr-[1px]">
        <svg viewBox="0 0 30 30" className="mt-[3px] h-[30px] w-[30px]">
          <path d="M1 19C0 11 7 4 16 4 24 4 28 9 26 16 24 23 18 27 12 26 9 25.500 11 22 8 21 5 20.500 2 23 1 19Z" fill="#d3e7f4" />
          <circle cx="5.500" cy="15" r="2.500" fill="#d9402f" />
          <circle cx="10" cy="9.500" r="2.500" fill="#53b748" />
          <circle cx="16.500" cy="8" r="2.500" fill="#f5b81c" />
          <circle cx="13" cy="20" r="2" fill="#2c4048" />
          <path d="M24 7 18 28 15.500 28.500 21 6Z" fill="#e0822c" />
          <path d="M21 6C21 2 26 2 29 0 29 5 27 8 24 8Z" fill="#b98b5d" />
        </svg>
      </Slot>
      <div className="ml-auto flex h-full items-center">
        <svg viewBox="0 0 28 19" className="mb-[2px] h-[19px] w-[28px]">
          <path d="M18 3C23 1 28 5 26.500 10L22 17Z" fill="#3282cf" />
          <path d="M7 19C-1 19-1 9.500 6 8.500 7 1 17-2 20 5.500 26 5 29 11 26 15.500 24.500 18 23 19 20 19Z" fill="#c2e6fa" />
        </svg>
        <Fit className="ml-[11px] w-[37px] text-[18px]">23°C</Fit>
        <Fit className="ml-[11px] w-[68px] text-[18px]">Nublado</Fit>
        <svg viewBox="0 0 16 9" className="ml-[22px] h-[9px] w-[16px]" fill="none" stroke="#fff" strokeWidth="1.300">
          <path d="M.5 8.500 8 1 15.500 8.500" />
        </svg>
        <svg viewBox="0 0 20 13" className="ml-[12px] h-[13px] w-[20px]">
          <path d="M3 7C4 2 8-1 12 1 15 2 16 4 16 6L20 9 10 11Z" fill="#a6abb1" />
          <path d="M4 13C-1 13-1 7 4 6.500 7 4 11 6 12 7.500 16 5 20 8 20 10.500 20 12 19 13 17 13Z" fill="#fff" />
        </svg>
        <svg viewBox="0 0 19 11" className="ml-[11px] h-[11px] w-[19px]" fill="none" stroke="#fff" strokeWidth="1.300">
          <path d="M.7.700H16.500V10.300H.7ZM18.200 3.500V7.500" />
          <path d="M2.500 2.500h9.500v6H2.500z" fill="#fff" stroke="none" />
        </svg>
        <svg viewBox="0 0 16 16" className="ml-[13px] h-[16px] w-[16px]" fill="none" stroke="#fff" strokeWidth="1.200">
          <path d="M.7 15A14.300 14.300 0 0 1 15 .7M4.700 15.300A10.300 10.300 0 0 1 15 5M8.700 15.300A6.300 6.300 0 0 1 15 9" />
          <circle cx="13.800" cy="13.800" r="1.700" fill="#fff" stroke="none" />
        </svg>
        <svg viewBox="0 0 21 18" className="ml-[11px] h-[18px] w-[21px]" fill="none" stroke="#fff" strokeWidth="1.200">
          <path d="M.7 6H3L7.500 2V16L3 12H.7ZM10.500 6.500Q12 9 10.500 11.500M13.500 4Q16.500 9 13.500 14M16.500 1.500Q21.500 9 16.500 16.500" />
        </svg>
        <div className="ml-[13px] flex w-[74px] flex-col items-center text-[14px] leading-[23px]">
          <Fit className="w-[70px]">12:27 a. m.</Fit>
          <Fit className="w-[74px]">17/06/2021</Fit>
        </div>
        <div className="relative ml-[24px] h-full w-[30px]">
          <svg viewBox="0 0 20 20" className="absolute top-[15px] left-0 h-[20px] w-[20px]">
            <path d="M0 0H20V16H8L4 20V16H0Z" fill="#fff" />
            <path d="M4 4.500H16M4 8.300H16M4 12H11" stroke="#1b2843" strokeWidth="1.300" />
          </svg>
          <div className="absolute top-[24px] left-[9px] h-[21px] w-[21px] rounded-full border border-[#8a8d93] bg-[#2c303a] text-center text-[13px] leading-[19px]">1</div>
        </div>
        <div className="mr-[5px] ml-[15px] h-full w-px bg-[#6d7484]" />
      </div>
    </div>
  );
}

export default function App() {
  return (
    <div className="flex h-[1080px] w-[1920px] flex-col overflow-hidden bg-white font-['Open_Sans',sans-serif]">
      <TabStrip />
      <AddressBar />
      <BookmarksBar />
      <Header />
      <Breadcrumbs />
      <Workspace />
      <Taskbar />
    </div>
  );
}
